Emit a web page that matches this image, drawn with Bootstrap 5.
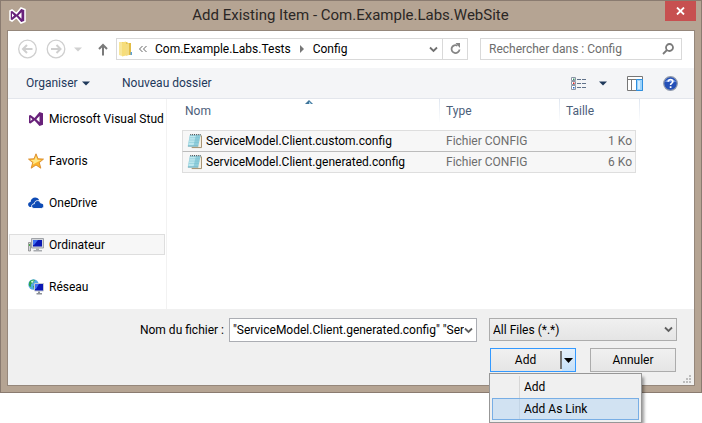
<!DOCTYPE html>
<html lang="fr">
<head>
<meta charset="utf-8">
<meta name="viewport" content="width=device-width, initial-scale=1">
<title>Add Existing Item - Com.Example.Labs.WebSite</title>
<link href="https://cdn.jsdelivr.net/npm/bootstrap@5.3.0/dist/css/bootstrap.min.css" rel="stylesheet">
<style>
  body { font-family: Roboto, "Open Sans", sans-serif; font-size: 12px; line-height: 16px; color: #000; background: #fff; min-height: 100vh; }
  svg { display: block; flex: none; }
  button, input, select { font: inherit; color: inherit; }
  .plain { border: 0; background: none; padding: 0; }
  .dialog { background: #b5a493; border: 1px solid #8a7b70; padding: 0 6px 6px; }
  .titlebar { height: 29px; padding-left: 2px; }
  .titlebar h1 { font-size: 15px; line-height: 20px; font-weight: 400; color: #2b2725; padding-left: 10px; }
  .close-btn { width: 31px; height: 20px; background: #c75050; margin-right: -1px; }
  .client { border: 1px solid #95877b; background: #fff; }
  .addressbar { padding: 7px 12px 8px 10px; }
  .field { height: 22px; border: 1px solid #d9d9d9; background: #fff; }
  .crumbs { padding-left: 2px; }
  .crumbs a { color: #000; }
  .crumbs .folder { margin-right: 6px; }
  .refresh { width: 25px; height: 20px; border-left: 1px solid #d9d9d9; }
  .search { width: 202px; margin-left: 12px; padding: 0 7px 0 8px; }
  .search input { color: #6d6d6d; outline: 0; }
  .search input::placeholder { color: #6d6d6d; opacity: 1; }
  .tools { height: 31px; background: #f4f5f7; border-bottom: 1px solid #e3e6ec; padding: 0 16px 0 18px; color: #1e395b; }
  .organise { width: 64px; }
  .places { width: 159px; border-right: 1px solid #f2f2f2; padding: 9px 1px 12px; gap: 21px; }
  .places a { height: 21px; border: 1px solid transparent; padding-left: 18px; gap: 5px; color: #000; white-space: nowrap; overflow: hidden; }
  .places a.current { background: #f7f7f7; border-color: #dedede; }
  .files { padding: 0 54px 0 15px; position: relative; }
  .files table { width: 100%; table-layout: fixed; border-collapse: separate; border-spacing: 0; }
  .files th { height: 31px; padding: 4px 0 0 7px; font-weight: 400; color: #4c607a; vertical-align: top; background: linear-gradient(#dfe6f0, #fff 24px) left top / 1px 24px no-repeat; }
  .files th:first-child { background: none; padding-left: 3px; }
  .files th:last-child { background: linear-gradient(#dfe6f0, #fff) left top / 1px 24px no-repeat, linear-gradient(#dfe6f0, #fff) right top / 1px 24px no-repeat; }
  .files td { height: 21px; padding: 0 0 0 7px; color: #6d6d6d; background: #f7f7f7; border-bottom: 1px solid #dedede; }
  .files tbody tr:first-child td { height: 22px; border-top: 1px solid #dedede; border-bottom-color: #bcbcbc; }
  .files td:first-child { border-left: 1px solid #dedede; padding-left: 4px; color: #000; }
  .files td.size { border-right: 1px solid #dedede; text-align: right; padding-right: 3px; }
  .files tbody tr td.gutter { background: none; border: 0; padding: 0; }
  .col-type { width: 120px; } .col-size { width: 77px; } .col-gutter { width: 4px; }
  .sort-mark { position: absolute; left: 138px; top: 1px; }
  .actions { background: #f0f0f0; padding: 9px 17px 13px; position: relative; gap: 6px; }
  .name-row label { padding: 4px 5px 0 0; }
  .name-box { width: 248px; height: 24px; border: 1px solid #abadb3; background: #fff; padding: 0 3px; margin-right: 12px; }
  .name-box input { outline: 0; }
  .side { width: 188px; }
  .type-box { display: block; height: 23px; border: 1px solid #acacac; border-radius: 0; padding: 0 24px 0 3px; appearance: none; background: url("data:image/svg+xml,%3Csvg xmlns='http://www.w3.org/2000/svg' width='9' height='7'%3E%3Cpath d='M1 1.500L4.500 5 8 1.500' fill='none' stroke='%23606060' stroke-width='1.800'/%3E%3C/svg%3E") right 3px center / 9px 7px no-repeat, linear-gradient(#f0f0f0, #e5e5e5); }
  .button-row { padding: 0 1px; }
  .push { width: 86px; height: 24px; border: 1px solid #acacac; background: linear-gradient(#f0f0f0, #e5e5e5); }
  .split { border-color: #3399ff; position: relative; background: linear-gradient(#e4f0fb, #c5e0f8) right / 13px 100% no-repeat, linear-gradient(#f0f0f0, #e5e5e5); }
  .split .drop { width: 15px; height: 18px; margin: 2px 0; border-left: 2px solid #777; }
  .split-menu { left: -2px; top: 24px; width: 153px; min-width: 0; border: 1px solid #979797; border-radius: 0; padding: 2px; margin: 0; font-size: 12px; background: #f0f0f0 linear-gradient(#d7d7d7, #d7d7d7) 29px 2px / 1px 44px no-repeat; box-shadow: 3px 3px 3px -1px rgba(0,0,0,.4); }
  .split-menu button { height: 22px; width: 100%; border: 1px solid transparent; background: none; padding: 0 0 0 31px; text-align: left; color: #000; display: block; }
  .split-menu button.hot { border-color: #78aee5; background: #d1e2f2 linear-gradient(#c3d5e6, #c3d5e6) 26px 0 / 1px 100% no-repeat; }
  .grip { position: absolute; right: 3px; bottom: 2px; }
</style>
<script src="https://cdn.jsdelivr.net/npm/bootstrap@5.3.0/dist/js/bootstrap.bundle.min.js"></script>
</head>
<body>
<svg class="d-none" aria-hidden="true">
  <symbol id="notepad" viewBox="0 0 16 16"><path d="M14 2.500h1.500v12.500H5" fill="#f4efe3" stroke="#a08c68"/><path d="M3 1.500h11.500L12 13.500H.8z" fill="#8fcddb"/><path d="M3.300 2.500h6L7 12.500H1.500z" fill="#bfe8ef"/><path d="M3 4.500h10.500M2.500 7h10.500M2 9.500h10.500" stroke="#74bccc" stroke-width=".5"/><path d="M1 13.500h11" stroke="#5c9dad" stroke-width=".8"/><path d="M3.500 1.200h11" stroke="#3c4a50" stroke-width="1.400" stroke-dasharray="1 1"/></symbol>
</svg>
<main class="dialog">
  <header class="titlebar d-flex align-items-start">
    <svg class="mt-1" width="17" height="20" viewBox="0 0 17 20"><path d="M1 6l2-1 4.500 3.500L12 3l4 1.500v12L12 18l-4.500-5.500L3 16l-2-1z" fill="#68217a" stroke="#fff" stroke-width="1.500"/><path d="M3 8.300v4.200l2.200-2zM12.500 7.300L9.200 10.500l3.300 3.200z" fill="#fff"/></svg>
    <h1 class="flex-grow-1 text-center mb-0 pt-1">Add Existing Item - Com.Example.Labs.WebSite</h1>
    <button class="plain close-btn d-flex align-items-center justify-content-center" aria-label="Fermer"><svg width="9" height="8" viewBox="0 0 9 8"><path d="M1 .5l7 7M8 .5l-7 7" stroke="#fff" stroke-width="1.800"/></svg></button>
  </header>
  <div class="client">
    <nav class="addressbar d-flex align-items-center">
      <button class="plain" aria-label="Précédent"><svg width="19" height="20" viewBox="0 0 19 20" fill="none" stroke="#cfcfcf"><circle cx="9.500" cy="10" r="8.800" stroke-width="1.300"/><path d="M5 10h9.500M9 6l-4 4 4 4" stroke-width="2"/></svg></button>
      <button class="plain ms-2" aria-label="Suivant"><svg width="21" height="20" viewBox="0 0 21 20" fill="none" stroke="#cfcfcf"><circle cx="11" cy="10" r="8.800" stroke-width="1.300"/><path d="M6 10h9.500M11.500 6l4 4-4 4" stroke-width="2"/></svg></button>
      <button class="plain px-2" aria-label="Emplacements récents"><svg width="8" height="5" viewBox="0 0 8 5"><path d="M0 .5h8L4 4.500z" fill="#d0d0d0"/></svg></button>
      <button class="plain ms-2 me-2" aria-label="Dossier parent"><svg width="10" height="13" viewBox="0 0 10 13" fill="none" stroke="#7a7a7a" stroke-width="2"><path d="M5 12.500V2M1 6l4-4 4 4"/></svg></button>
      <div class="field crumbs flex-grow-1 d-flex align-items-center">
        <svg class="folder" width="14" height="16" viewBox="0 0 14 16"><path d="M0 1h8l1 1h3v12H0z" fill="#e6c85c"/><path d="M0 1h3v14l-3-1z" fill="#f8e69a"/><path d="M3 1.500l4-1v14l-4 1z" fill="#f6dd7b"/><path d="M7 2h5v12H7z" fill="#e2bc45"/><path d="M7 3l3-1v12l-3 1z" fill="#f3dc83"/><path d="M11.500 11h1.500v3h-1.500z" fill="#5aa0d8"/></svg>
        <svg width="8" height="8" viewBox="0 0 8 8" fill="none" stroke="#666"><path d="M3.500 1l-3 3 3 3M7.500 1l-3 3 3 3"/></svg>
        <a class="ms-2 text-decoration-none" href="#tests">Com.Example.Labs.Tests</a>
        <svg class="mx-2" width="6" height="8" viewBox="0 0 6 8"><path d="M1 0l4 4-4 4z" fill="#777"/></svg>
        <a class="text-decoration-none flex-grow-1" href="#config">Config</a>
        <button class="plain me-1" aria-label="Historique"><svg width="9" height="7" viewBox="0 0 9 7"><path d="M1 1.500L4.500 5 8 1.500" fill="none" stroke="#707070" stroke-width="1.800"/></svg></button>
        <button class="plain refresh d-flex align-items-center justify-content-center" aria-label="Actualiser"><svg width="11" height="12" viewBox="0 0 11 12"><path d="M7.500 2.600A4 4 0 1 0 9.500 6.500" fill="none" stroke="#858585" stroke-width="1.800"/><path d="M5.500 0H10v5z" fill="#858585"/></svg></button>
      </div>
      <div class="field search d-flex align-items-center">
        <input class="plain flex-grow-1 w-100" type="search" aria-label="Rechercher dans : Config" placeholder="Rechercher dans : Config">
        <svg width="12" height="12" viewBox="0 0 12 12" fill="none" stroke="#7a7a7a" stroke-width="1.800"><circle cx="7.500" cy="4.500" r="3.500"/><path d="M5 7L1 11"/></svg>
      </div>
    </nav>
    <div class="tools d-flex align-items-center">
      <button class="plain organise d-flex align-items-center justify-content-between">Organiser <svg width="8" height="5" viewBox="0 0 8 5"><path d="M0 .5h8L4 4.500z" fill="#1e395b"/></svg></button>
      <button class="plain ms-4 ps-2">Nouveau dossier</button>
      <button class="plain ms-auto" aria-label="Affichage"><svg width="16" height="13" viewBox="0 0 16 13"><g fill="#fff" stroke="#8a95a5"><path d="M.5.5h4v3h-4zM.5 4.500h4v3h-4zM.5 8.500h4v4h-4z"/></g><path d="M2 1.500h1.500V3H2z" fill="#3b8f6a"/><path d="M2 5.500h1.500V7H2z" fill="#d22"/><path d="M2 10h1.500v1.500H2z" fill="#26c"/><path d="M6 2.500h4m1 0h4M6 6.500h4m1 0h4M6 10.500h4m1 0h4" stroke="#60728a"/></svg></button>
      <button class="plain ms-2 px-1" aria-label="Autres options d'affichage"><svg width="8" height="5" viewBox="0 0 8 5"><path d="M0 .5h8L4 4.500z" fill="#1e395b"/></svg></button>
      <button class="plain ms-3" aria-label="Volet de visualisation"><svg width="16" height="15" viewBox="0 0 16 15"><path d="M.5.5h15v14H.5z" fill="#fff" stroke="#777"/><path d="M1 3.500h14M4.500 4v10" stroke="#777"/><path d="M9.500 3.500h6v11h-6z" fill="#9cd3fb" stroke="#2d8fe0"/><path d="M11 5h2v8h-2z" fill="#d3edff"/></svg></button>
      <button class="plain ms-3 ps-1" aria-label="Aide"><svg width="15" height="15" viewBox="0 0 15 15"><circle cx="7.500" cy="7.500" r="6.800" fill="#2450b8" stroke="#8e98ab" stroke-width="1.200"/><path d="M2 6a6 5 0 0 1 11 0z" fill="#6d92e3"/><path d="M5.200 5.700c0-3 4.800-2.800 4.600 0-.1 1.500-2.200 1.500-2.200 3.300M7.600 10.300v1.700" fill="none" stroke="#fff" stroke-width="1.700"/></svg></button>
    </div>
    <div class="d-flex">
      <nav class="places d-flex flex-column flex-shrink-0" aria-label="Emplacements">
        <a class="d-flex align-items-center text-decoration-none" href="#vs"><svg width="16" height="16" viewBox="0 0 16 16"><path fill-rule="evenodd" d="M1 4.500L2.500 4 6.500 7 11.500 1l3.500 1.200v11.600L11.500 15l-5-5.500-4 3L1 12zM2.500 6.500v3.500L4.500 8.200zM11.500 5L8.300 8.200l3.200 3z" fill="#68217a"/></svg>Microsoft Visual Studio</a>
        <a class="d-flex align-items-center text-decoration-none" href="#favoris"><svg width="16" height="16" viewBox="0 0 16 16"><path d="M8 .8l2 5 5.500.3-4.200 3.500 1.500 5.600L8 12l-4.800 3.200 1.500-5.600L.5 6.100 6 5.800z" fill="#fbb52c" stroke="#d98a2b" stroke-width=".9"/><path d="M8 3l1.300 3.800 4 .3-8.500 4.500.8-2.600L2.500 7l4-.2z" fill="#ffe88a"/></svg>Favoris</a>
        <a class="d-flex align-items-center text-decoration-none" href="#onedrive"><svg width="16" height="16" viewBox="0 0 16 16"><path d="M1.800 12C-1 10.500 0 7.200 2.600 7 2.700 2.300 8.800.8 11 4.700L7 9l-3 3z" fill="#0e4bb5"/><path d="M6 13.500c-3.500-.3-3-4.800.3-4.700.3-4 5.500-4.300 6.200-.8 4-.3 4.500 5 .8 5.500z" fill="#0e4bb5" stroke="#fff" stroke-width=".9"/></svg>OneDrive</a>
        <a class="current d-flex align-items-center text-decoration-none" href="#ordinateur"><svg width="16" height="16" viewBox="0 0 16 16"><path d="M.5 5.500h2v8.500h-2z" fill="#d0d4d8" stroke="#888" stroke-width=".8"/><path d="M1 7h1.200v2H1z" fill="#4ba64b"/><path d="M3.500 1.500h12v9.500h-12z" fill="#d2d5da" stroke="#a0a3a8"/><path d="M5 3h9v6.500H5z" fill="#0b18b4"/><path d="M5 3h5L6 8H5z" fill="#3d6ff0"/><path d="M8 11.500h3V13h3v1.500H5.500V13H8z" fill="#a9acb0"/></svg>Ordinateur</a>
        <a class="d-flex align-items-center text-decoration-none" href="#reseau"><svg width="16" height="16" viewBox="0 0 16 16"><circle cx="5.500" cy="5.500" r="5.200" fill="#54a9e4"/><path d="M1 3.500C3 0 5 .5 7 1L5 4 3 5v3L1 7zM5 7l3-1v4l-2 .5z" fill="#2ca64c"/><path d="M3 2l3-.5-2 3z" fill="#d5f4e6"/><path d="M6.500 4.500h9v7.500h-9z" fill="#0b18b4" stroke="#c5cad2"/><path d="M7 5h4l-3 5H7z" fill="#3d6ff0"/><path d="M10 12.500h2V14h2v1.500H8.500V14H10z" fill="#8e9298"/></svg>Réseau</a>
      </nav>
      <section class="files flex-grow-1">
        <svg class="sort-mark" width="8" height="4" viewBox="0 0 8 4"><path d="M0 4l4-4 4 4z" fill="#3f7499"/><path d="M4 1.500L6.500 4H4z" fill="#a9d8f0"/></svg>
        <table>
          <colgroup><col><col class="col-type"><col class="col-size"><col class="col-gutter"></colgroup>
          <thead><tr><th scope="col">Nom</th><th scope="col">Type</th><th scope="col" colspan="2">Taille</th></tr></thead>
          <tbody>
            <tr><td><span class="d-flex align-items-center"><svg class="me-1" width="15" height="16"><use href="#notepad"/></svg>ServiceModel.Client.custom.config</span></td><td>Fichier CONFIG</td><td class="size">1 Ko</td><td class="gutter"></td></tr>
            <tr><td><span class="d-flex align-items-center"><svg class="me-1" width="15" height="16"><use href="#notepad"/></svg>ServiceModel.Client.generated.config</span></td><td>Fichier CONFIG</td><td class="size">6 Ko</td><td class="gutter"></td></tr>
          </tbody>
        </table>
      </section>
    </div>
    <footer class="actions d-flex flex-column align-items-end">
      <div class="name-row d-flex align-items-start">
        <label for="file-name">Nom du fichier :</label>
        <div class="name-box d-flex align-items-center">
          <input class="plain flex-grow-1 w-100" id="file-name" type="text" value='"ServiceModel.Client.generated.config" "ServiceModel.Client.custom.config"'>
          <button class="plain" aria-label="Noms récents"><svg width="9" height="7" viewBox="0 0 9 7"><path d="M1 1.500L4.500 5 8 1.500" fill="none" stroke="#606060" stroke-width="1.800"/></svg></button>
        </div>
        <div class="side"><select class="type-box w-100" aria-label="Type de fichier"><option>All Files (*.*)</option></select></div>
      </div>
      <div class="side button-row d-flex justify-content-between">
        <div class="push split d-flex">
          <button class="plain flex-grow-1">Add</button>
          <button class="plain drop d-flex align-items-center justify-content-center" aria-label="Autres options d'ajout" aria-expanded="true"><svg width="9" height="5" viewBox="0 0 9 5"><path d="M0 0h9L4.500 5z" fill="#000"/></svg></button>
          <div class="split-menu dropdown-menu show">
            <button>Add</button>
            <button class="hot">Add As Link</button>
          </div>
        </div>
        <button class="push">Annuler</button>
      </div>
      <svg class="grip" width="8" height="8" viewBox="0 0 8 8" fill="#bdbdbd"><path d="M6 0h2v2H6zM3 3h2v2H3zM6 3h2v2H6zM0 6h2v2H0zM3 6h2v2H3zM6 6h2v2H6z"/></svg>
    </footer>
  </div>
</main>
</body>
</html>
